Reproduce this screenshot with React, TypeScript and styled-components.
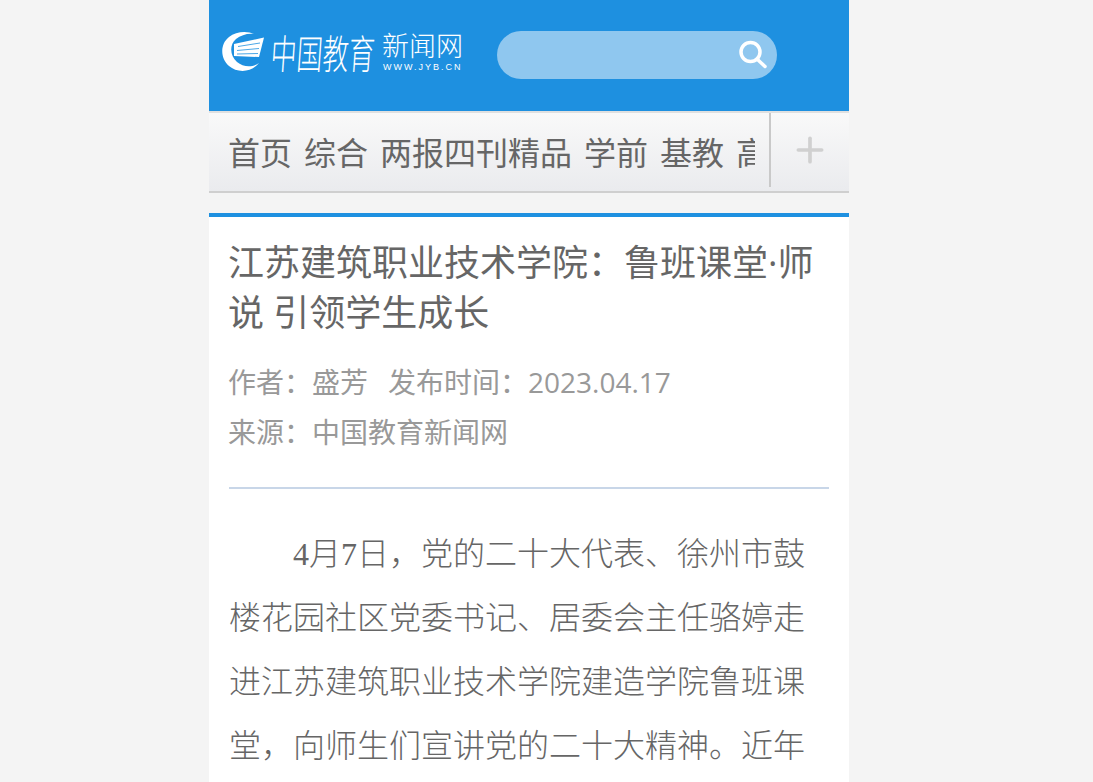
import React from 'react'
import styled, { createGlobalStyle } from 'styled-components'
import { Plus } from 'lucide-react'

const GlobalStyle = createGlobalStyle`
  html, body {
    margin: 0;
    padding: 0;
    background: #f4f4f4;
    height: 782px;
    overflow: hidden;
    font-family: "Open Sans", "Noto Sans CJK SC", sans-serif;
  }
`

const Page = styled.div`
  width: 640px;
  margin-left: 209px;
`

const Header = styled.header`
  height: 111px;
  background: #1e90e0;
  display: flex;
  align-items: center;
  box-sizing: border-box;
  padding: 0 0 1px 13px;
`

const Logo = styled.div`
  display: flex;
  align-items: center;
  width: 275px;
  height: 44px;
  margin-bottom: 6px;
  flex-shrink: 0;
  color: #fff;
`

const LogoCalligraphy = styled.div`
  width: 106px;
  margin-left: 6px;
  font-family: "Noto Sans CJK SC", sans-serif;
  font-size: 26px;
  font-weight: 300;
  line-height: 28px;
  white-space: nowrap;
  transform: scaleY(1.55) skewX(-6deg);
`

const LogoSide = styled.div`
  display: flex;
  flex-direction: column;
  gap: 4px;
  margin-left: 5px;
`

const LogoName = styled.div`
  font-family: "Noto Sans CJK SC", sans-serif;
  font-size: 27px;
  font-weight: 300;
  line-height: 26px;
  white-space: nowrap;
`

const LogoUrl = styled.div`
  font-family: "Liberation Sans", sans-serif;
  font-size: 9px;
  line-height: 10px;
  letter-spacing: 2px;
  margin-left: 1px;
  white-space: nowrap;
`

const SearchBox = styled.div`
  width: 280px;
  height: 48px;
  border-radius: 24px;
  background: #8fc7ef;
  display: flex;
  align-items: center;
  justify-content: flex-end;
  padding-right: 9px;
  box-sizing: border-box;
`

const Nav = styled.nav`
  height: 82px;
  display: flex;
  box-sizing: border-box;
  border-top: 2px solid #e0e0e0;
  border-bottom: 2px solid #cfcfcf;
  background: linear-gradient(#f9f9f9, #eaebee);
`

const NavScroller = styled.div`
  width: 527px;
  margin-left: 19px;
  padding-bottom: 2px;
  box-sizing: border-box;
  overflow: hidden;
  display: flex;
  gap: 12px;
  align-items: center;
  height: 78px;
`

const NavItem = styled.span`
  font-size: 32px;
  color: #666;
  white-space: nowrap;
  flex-shrink: 0;
`

const NavMore = styled.div`
  width: 78px;
  height: 74px;
  margin-left: 14px;
  border-left: 2px solid #c9c9c9;
  display: flex;
  align-items: center;
  justify-content: center;
  color: #d0d0d0;
`

const Article = styled.article`
  margin-top: 20px;
  background: #fff;
  border-top: 4px solid #1e90e0;
  padding: 21px 20px 0;
`

const Title = styled.h1`
  margin: 0 0 0 -1px;
  font-size: 36px;
  line-height: 50px;
  font-weight: normal;
  color: #666;
`

const Meta = styled.div`
  margin-top: 19px;
  padding-bottom: 30px;
  border-bottom: 2px solid #c8d6e8;
`

const MetaRow = styled.div`
  margin-left: -1px;
  font-size: 28px;
  line-height: 50px;
  color: #999;
`

const MetaGap = styled.span`
  margin-left: 20px;
`

const Body = styled.p`
  margin: 33px 0 0;
  padding: 0 24px 0 0;
  font-family: "Liberation Serif", "Noto Sans CJK SC", serif;
  font-size: 32px;
  font-weight: 300;
  line-height: 64px;
  text-indent: 2em;
  text-align: justify;
  color: #666;
`

export default function App() {
  return (
    <Page>
      <GlobalStyle />
      <Header>
        <Logo>
          <svg width="43" height="42" viewBox="0 0 43 42">
            <path
              d="M32 3C26 0 14 0 7 6C-2 13 -2 27 7 35C15 42 29 42 37 32C30 37 21 36 15 31C8 25 7 14 14 8C19 4 26 2 32 3Z"
              fill="#fff"
            />
            <path d="M12 13L42 6.500L37 26L12 25Z" fill="#fff" />
            <path d="M16 15.500L38 12M15 19.500L37 17.500M15 23L36 22.500" stroke="#1e90e0" strokeWidth="0.8" />
          </svg>
          <LogoCalligraphy>中国教育</LogoCalligraphy>
          <LogoSide>
            <LogoName>新闻网</LogoName>
            <LogoUrl>WWW.JYB.CN</LogoUrl>
          </LogoSide>
        </Logo>
        <SearchBox>
          <svg width="30" height="30" viewBox="0 0 30 30" fill="none" stroke="#fff">
            <circle cx="12.500" cy="12" r="9.500" strokeWidth="3.500" />
            <path d="M19 19L27 26.500" strokeWidth="3.500" strokeLinecap="round" />
          </svg>
        </SearchBox>
      </Header>
      <Nav>
        <NavScroller>
          {['首页', '综合', '两报四刊精品', '学前', '基教', '高教'].map(label => (
            <NavItem key={label}>{label}</NavItem>
          ))}
        </NavScroller>
        <NavMore>
          <Plus size={40} strokeWidth={2.2} />
        </NavMore>
      </Nav>
      <Article>
        <Title>江苏建筑职业技术学院：鲁班课堂·师说 引领学生成长</Title>
        <Meta>
          <MetaRow>
            作者：盛芳<MetaGap>发布时间：2023.04.17</MetaGap>
          </MetaRow>
          <MetaRow>来源：中国教育新闻网</MetaRow>
        </Meta>
        <Body>
          4月7日，党的二十大代表、徐州市鼓楼花园社区党委书记、居委会主任骆婷走进江苏建筑职业技术学院建造学院鲁班课堂，向师生们宣讲党的二十大精神。近年来，学院坚持立德树人，不断创新思政教育形式。
        </Body>
      </Article>
    </Page>
  )
}
